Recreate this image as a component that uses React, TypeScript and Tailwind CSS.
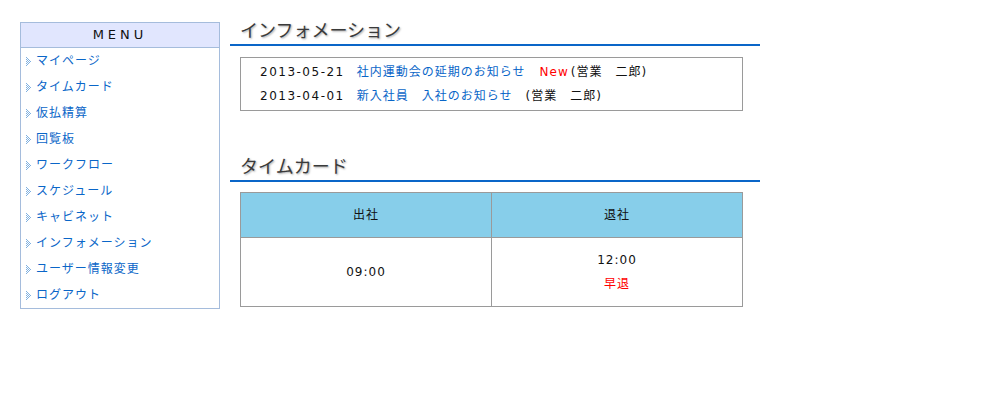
import { FC } from "react";

const menuItems = [
  "マイページ",
  "タイムカード",
  "仮払精算",
  "回覧板",
  "ワークフロー",
  "スケジュール",
  "キャビネット",
  "インフォメーション",
  "ユーザー情報変更",
  "ログアウト",
];

const news = [
  { date: "2013-05-21", title: "社内運動会の延期のお知らせ", isNew: true, author: "(営業　二郎)" },
  { date: "2013-04-01", title: "新入社員　入社のお知らせ", isNew: false, author: "(営業　二郎)" },
];

const font = "font-['DejaVu_Sans','Noto_Sans_CJK_JP',sans-serif]";

// dotted arrow mark in front of each menu link
const Arrow: FC = () => (
  <svg width="7" height="9" viewBox="0 0 7 9" className="shrink-0">
    {[
      [0, 0], [0, 2], [0, 4], [0, 6], [0, 8],
      [1, 1], [1, 3], [1, 5], [1, 7],
      [2, 2], [2, 4], [2, 6],
      [3, 3], [3, 5],
      [4, 4],
    ].map(([x, y]) => (
      <rect key={`${x}-${y}`} x={x} y={y} width="1" height="1" fill="#7fb0e0" />
    ))}
  </svg>
);

const Heading: FC<{ title: string }> = ({ title }) => (
  <div className="border-b-2 border-[#0a66c8] pl-[10px] pb-[4px]">
    <h2 className="text-[18px] leading-[18px] text-[#3a3a3a] tracking-[0px] [text-shadow:1px_1px_2px_#a8a8a8]">
      {title}
    </h2>
  </div>
);

const App: FC = () => {
  return (
    <div className={`${font} w-[1000px] h-[400px] bg-white flex items-start gap-[10px] pl-[20px] pt-[22px] text-[12px] tracking-[1px]`}>
      <div className="w-[200px] border border-[#a5bcdc]">
        <div className="h-[25px] bg-[#e1e6fe] border-b border-[#a5bcdc] flex items-center justify-center text-[13px] tracking-[4px] text-[#111]">
          MENU
        </div>
        <ul>
          {menuItems.map((item) => (
            <li key={item} className="h-[26px] flex items-center gap-[3px] pl-[5px]">
              <Arrow />
              <a className="text-[#0a66c8] cursor-pointer">{item}</a>
            </li>
          ))}
        </ul>
      </div>

      <div className="w-[530px]">
        <Heading title="インフォメーション" />
        <div className="ml-[10px] mt-[11px] w-[503px] border border-[#9a9a9a] py-[2px] pl-[19px]">
          {news.map((n) => (
            <div key={n.date} className="h-[24px] flex items-center whitespace-nowrap text-[#111]">
              <span className="tracking-[1.5px]">{n.date}</span>
              <a className="ml-[12px] text-[#0a66c8] cursor-pointer">{n.title}</a>
              {n.isNew && <span className="ml-[14px] text-[#ff0000]">New</span>}
              <span className={n.isNew ? "ml-[2px]" : "ml-[13px]"}>{n.author}</span>
            </div>
          ))}
        </div>

        <div className="mt-[47px]">
          <Heading title="タイムカード" />
        </div>
        <table className="ml-[10px] mt-[10px] w-[503px] border-collapse text-[#111]">
          <thead>
            <tr className="h-[45px] bg-[#87ceea]">
              <th className="border border-[#9a9a9a] font-normal w-1/2">出社</th>
              <th className="border border-[#9a9a9a] font-normal w-1/2">退社</th>
            </tr>
          </thead>
          <tbody>
            <tr className="h-[69px]">
              <td className="border border-[#9a9a9a] text-center">09:00</td>
              <td className="border border-[#9a9a9a] text-center leading-[24px]">
                <div>12:00</div>
                <div className="text-[#ff0000]">早退</div>
              </td>
            </tr>
          </tbody>
        </table>
      </div>
    </div>
  );
};

export default App;
